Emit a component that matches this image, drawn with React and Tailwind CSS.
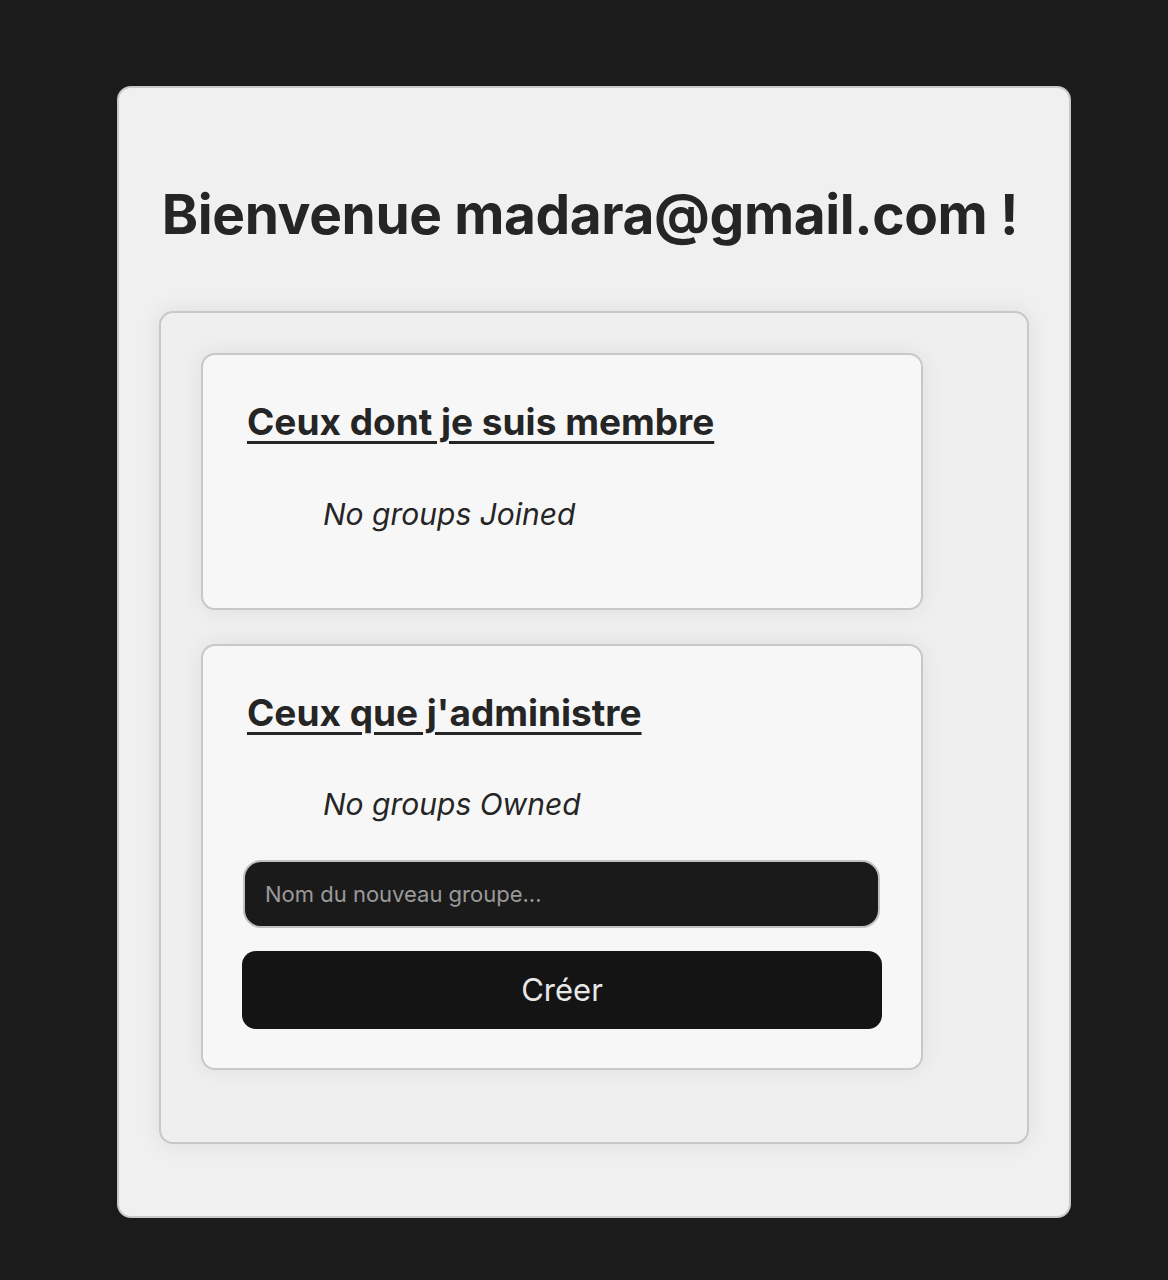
export default function App() {
  return (
    <div className="min-h-[1280px] bg-[#1b1b1b] pt-[86px] font-['Inter',sans-serif] text-[#252525]">
      <div className="ml-[117px] w-[954px] rounded-[14px] border-2 border-[#c8c8c8] bg-[#f0f0f0] px-[40px] pb-[72px] pt-[88px]">
        <h1 className="whitespace-nowrap pr-[8px] text-center text-[55px] font-bold leading-[76px] tracking-[-0.4px]">Bienvenue madara@gmail.com !</h1>
        <div className="mt-[59px] rounded-[14px] border-2 border-[#c8c8c8] bg-[#efefef] px-[40px] pb-[72px] pt-[40px] shadow-[0_0_24px_rgba(0,0,0,0.08)]">
          <section className="w-[722px] rounded-[14px] border-2 border-[#c8c8c8] bg-[#f7f7f7] px-[40px] pb-[76px] pt-[45px] shadow-[0_0_24px_rgba(0,0,0,0.07)]">
            <h2 className="whitespace-nowrap pl-[4px] text-[37px] font-bold leading-[44px] underline decoration-[3px] underline-offset-[6px]">Ceux dont je suis membre</h2>
            <p className="mt-[52px] pl-[80px] text-[30px] italic leading-[36px]">No groups Joined</p>
          </section>
          <section className="mt-[34px] w-[722px] rounded-[14px] border-2 border-[#c8c8c8] bg-[#f7f7f7] px-[40px] pb-[39px] pt-[45px] shadow-[0_0_24px_rgba(0,0,0,0.07)]">
            <h2 className="whitespace-nowrap pl-[4px] text-[37px] font-bold leading-[44px] underline decoration-[3px] underline-offset-[6px]">Ceux que j'administre</h2>
            <p className="mt-[51px] pl-[80px] text-[30px] italic leading-[36px]">No groups Owned</p>
            <input
              type="text"
              placeholder="Nom du nouveau groupe..."
              className="mt-[38px] block h-[68px] w-[637px] rounded-[18px] border-2 border-[#c0c0c0] bg-[#1a1a1a] px-[20px] text-[22px] text-white outline-none placeholder:text-[#9a9a9a]"
            />
            <button className="-ml-[1px] mt-[23px] block h-[78px] w-[640px] rounded-[14px] bg-[#141414] text-[31px] text-[#e8e8e8]">Créer</button>
          </section>
        </div>
      </div>
    </div>
  );
}
